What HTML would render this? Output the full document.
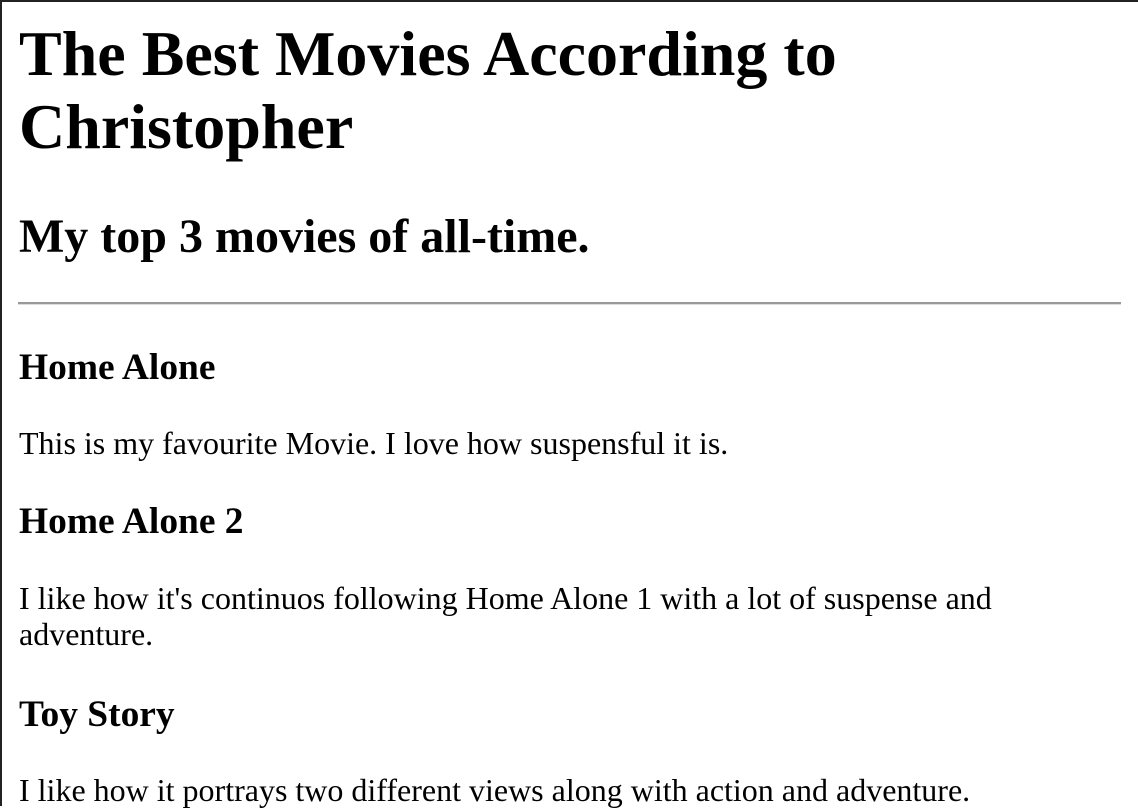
<!DOCTYPE html>
<html><head><meta charset="utf-8"><style>
html,body{margin:0;padding:0;background:#fff;}
body{width:1138px;height:806px;position:relative;overflow:hidden;font-family:"Liberation Serif",serif;color:#000;}
.bt{position:absolute;left:0;top:0;width:1138px;height:2px;background:#222;}
.bl{position:absolute;left:0;top:0;width:2px;height:806px;background:#222;}
.e{position:absolute;left:19px;margin:0;white-space:nowrap;}
h1.e{font-size:64px;line-height:73px;font-weight:bold;top:17px;}
h2.e{font-size:48px;line-height:55px;font-weight:bold;top:209px;}
h3.e{font-size:37.44px;line-height:43px;font-weight:bold;}
p.e{font-size:32px;line-height:36px;}
.hr{position:absolute;left:18px;top:302px;width:1103px;height:2px;background:#999;border-bottom:1px solid #ddd;}
</style></head><body>
<div class="bt"></div><div class="bl"></div>
<h1 class="e">The Best Movies According to<br>Christopher</h1>
<h2 class="e">My top 3 movies of all-time.</h2>
<div class="hr"></div>
<h3 class="e" style="top:346px">Home Alone</h3>
<p class="e" style="top:425px">This is my favourite Movie. I love how suspensful it is.</p>
<h3 class="e" style="top:500px">Home Alone 2</h3>
<p class="e" style="top:580px">I like how it's continuos following Home Alone 1 with a lot of suspense and<br>adventure.</p>
<h3 class="e" style="top:693px">Toy Story</h3>
<p class="e" style="top:772px">I like how it portrays two different views along with action and adventure.</p>
</body></html>
